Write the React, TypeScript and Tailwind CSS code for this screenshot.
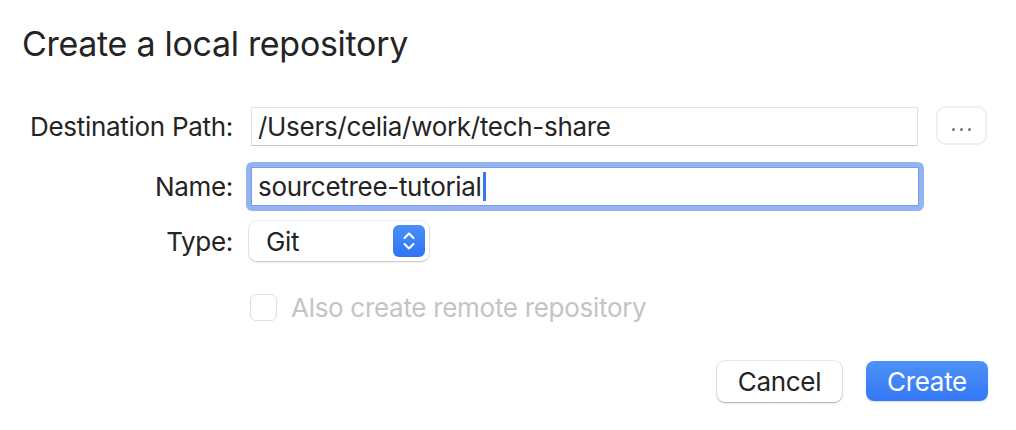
import { useState } from "react";

const font = { fontFamily: "Inter, 'Noto Sans', sans-serif" };

function Stepper() {
  return (
    <div className="flex h-[32px] w-[32px] items-center justify-center rounded-[6px] bg-gradient-to-b from-[#4b8ff8] to-[#2f74f5]">
      <svg width="14" height="22" viewBox="0 0 14 22" fill="none">
        <path d="M2.5 8 L7 3.5 L11.5 8" stroke="white" strokeWidth="2" strokeLinecap="round" strokeLinejoin="round" />
        <path d="M2.5 14 L7 18.5 L11.5 14" stroke="white" strokeWidth="2" strokeLinecap="round" strokeLinejoin="round" />
      </svg>
    </div>
  );
}

export default function App() {
  const [path] = useState("/Users/celia/work/tech-share");
  const [name] = useState("sourcetree-tutorial");

  return (
    <div
      className="flex h-[430px] w-[1016px] flex-col bg-white text-[26px] text-[#242424] tracking-[-0.3px]"
      style={font}
    >
      <h1 className="pl-[22px] pt-[22px] text-[34px] leading-[44px] font-normal">
        Create a local repository
      </h1>

      {/* form rows */}
      <div className="mt-[41px] grid grid-cols-[233px_667px_auto] items-center gap-x-[18px]">
        <div className="text-right">Destination Path:</div>
        <div className="flex h-[39px] w-[667px] items-center border border-[#e2e2e2] border-b-[#c6c6c6] bg-white pl-[6px]">
          {path}
        </div>
        <button className="-mt-[3px] flex h-[39px] w-[51px] items-center justify-center gap-[5px] rounded-[9px] border-2 border-[#efefef] pt-[9px]">
          <span className="h-[3px] w-[3px] rounded-full bg-[#777]" />
          <span className="h-[3px] w-[3px] rounded-full bg-[#777]" />
          <span className="h-[3px] w-[3px] rounded-full bg-[#777]" />
        </button>

        <div className="mt-[16px] text-right">Name:</div>
        <div className="mt-[16px] -ml-[5px] w-[678px] rounded-[6px] bg-[#93b3f2] p-[5px]">
          <div className="flex h-[39px] items-center border border-[#7b9de6] bg-white pl-[6px]">
            <span>{name}</span>
            <span className="ml-[1px] h-[29px] w-[3px] bg-[#3478f6]" />
          </div>
        </div>
        <div />

        <div className="mt-[10px] text-right">Type:</div>
        <div className="mt-[10px] -ml-[2px] flex h-[40px] w-[180px] items-center justify-between rounded-[8px] bg-white pl-[17px] pr-[4px] shadow-[0_0_0_1px_rgba(0,0,0,0.06),0_1px_2px_rgba(0,0,0,0.2)]">
          <span>Git</span>
          <Stepper />
        </div>
        <div />

        <div />
        <label className="mt-[27px] -ml-[1px] flex items-center gap-[14px] text-[#c4c4c4]">
          <span className="h-[27px] w-[27px] rounded-[6px] border border-[#dedede] bg-white" />
          Also create remote repository
        </label>
        <div />
      </div>

      <div className="mt-auto mb-[28px] flex justify-end gap-[24px] pr-[28px]">
        <button className="h-[41px] w-[125px] rounded-[8px] bg-white text-[#242424] shadow-[0_0_0_1px_rgba(0,0,0,0.08),0_1px_2px_rgba(0,0,0,0.25)]">
          Cancel
        </button>
        <button className="h-[40px] w-[122px] rounded-[8px] bg-gradient-to-b from-[#4e91f7] to-[#3478f6] text-white shadow-[0_1px_2px_rgba(0,0,0,0.15)]">
          Create
        </button>
      </div>
    </div>
  );
}
